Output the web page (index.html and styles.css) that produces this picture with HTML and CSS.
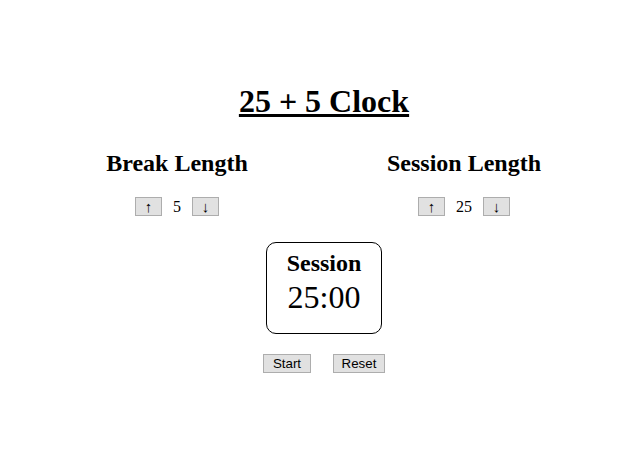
FILE: index.html
```html
<!DOCTYPE html>
<html lang="en">
<head>
<meta charset="utf-8">
<title>25 + 5 Clock</title>
<link rel="stylesheet" href="styles.css">
</head>
<body>
<div class="app">
  <h1 class="title">25 + 5 Clock</h1>
  <div class="lengths">
    <div class="length">
      <h2 class="length-label">Break Length</h2>
      <div class="controls">
        <button class="btn btn-arrow">↑</button>
        <span class="value">5</span>
        <button class="btn btn-arrow">↓</button>
      </div>
    </div>
    <div class="length">
      <h2 class="length-label">Session Length</h2>
      <div class="controls">
        <button class="btn btn-arrow">↑</button>
        <span class="value">25</span>
        <button class="btn btn-arrow">↓</button>
      </div>
    </div>
  </div>
  <div class="timer">
    <div class="timer-label">Session</div>
    <div class="timer-left">25:00</div>
  </div>
  <div class="actions">
    <button class="btn btn-start">Start</button>
    <button class="btn btn-reset">Reset</button>
  </div>
</div>
</body>
</html>
```
FILE: styles.css
```css
html, body {
  margin: 0;
  padding: 0;
  background: #ffffff;
}
body {
  font-family: "Liberation Serif", "Times New Roman", serif;
  color: #000000;
}
.app {
  padding: 83px 0 0 9px;
  display: flex;
  flex-direction: column;
  align-items: center;
}
.title {
  margin: 0;
  font-size: 32px;
  line-height: 36px;
  font-weight: bold;
  text-decoration: underline;
}
.lengths {
  align-self: flex-start;
  margin: 30px 0 0 38px;
  display: grid;
  grid-template-columns: 260px 260px;
  column-gap: 27px;
}
.length {
  display: flex;
  flex-direction: column;
  align-items: center;
}
.length-label {
  margin: 0;
  font-size: 24px;
  line-height: 28px;
  font-weight: bold;
}
.controls {
  margin-top: 20px;
  display: flex;
  align-items: center;
  gap: 11px;
}
.value {
  font-size: 16px;
  line-height: 19px;
}
.btn {
  font-family: "Liberation Sans", Arial, sans-serif;
  font-size: 13.33px;
  line-height: 15px;
  height: 19px;
  box-sizing: border-box;
  padding: 1px 6px;
  background: #e1e1e1;
  border: 1px solid #adadad;
  border-radius: 0;
  color: #000;
}
.btn-arrow {
  width: 27px;
  padding: 0;
  font-family: "Liberation Sans", Arial, sans-serif;
  font-size: 15px;
  line-height: 17px;
  color: #000;
}
.timer {
  margin-top: 26px;
  width: 116px;
  box-sizing: border-box;
  border: 1px solid #000;
  border-radius: 10px;
  padding: 6px 0 18px;
  display: flex;
  flex-direction: column;
  align-items: center;
}
.timer-label {
  font-size: 24px;
  line-height: 28px;
  font-weight: bold;
}
.timer-left {
  margin-top: 2px;
  font-size: 32px;
  line-height: 36px;
}
.actions {
  margin-top: 20px;
  display: flex;
  gap: 22px;
}
.btn-start {
  width: 48px;
  padding: 1px 0;
}
.btn-reset {
  width: 52px;
  padding: 1px 0;
}
```
